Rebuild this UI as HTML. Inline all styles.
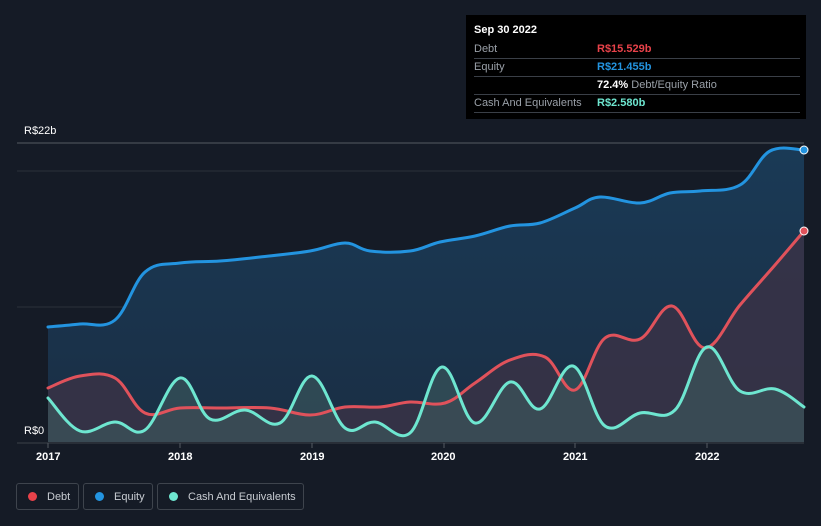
<!DOCTYPE html><html><head><style>
body{margin:0;width:821px;height:526px;background:#151b26;font-family:"Liberation Sans",sans-serif;overflow:hidden;position:relative}
.tt{position:absolute;left:466px;top:15px;width:340px;height:104px;background:#000;color:#fff;font-size:11px}
.r{position:absolute;left:8px;width:326px;height:18px;border-bottom:1px solid #3a3f47;line-height:18px}
.r span{position:absolute;left:123px}
.l{color:#9aa0a8}
.lg{position:absolute;top:483px;height:27px;border:1px solid #3e444d;border-radius:3px;color:#c8ccd2;font-size:11px;line-height:27px;box-sizing:border-box}
.dot{display:inline-block;width:9px;height:9px;border-radius:50%;margin:0 10px 0 11px;vertical-align:-1px}
.ax{position:absolute;top:451px;color:#fff;font-size:11px;font-weight:bold}
</style></head><body>
<svg id="s" width="821" height="526" style="position:absolute;left:0;top:0">
<defs><linearGradient id="eg" x1="0" y1="0" x2="0" y2="1"><stop offset="0" stop-color="#1a3a56"/><stop offset="1" stop-color="#1a2e44"/></linearGradient></defs>
<line x1="17" y1="143" x2="804" y2="143" stroke="#555b63"/>
<line x1="17" y1="171" x2="804" y2="171" stroke="#2a3039"/>
<line x1="17" y1="307" x2="804" y2="307" stroke="#2a3039"/>
<path id="ef" fill="url(#eg)"/>
<path id="df" fill="#3a3346" fill-opacity="0.85"/>
<path id="cf" fill="#3d5a5e" fill-opacity="0.6"/>
<g fill="none" stroke-width="3" stroke-linejoin="round" stroke-linecap="round">
<path id="el" stroke="#2394e0"/>
<path id="dl" stroke="#e0525b"/>
<path id="cl" stroke="#6ee6d0"/>
</g>
<line x1="17" y1="443" x2="804" y2="443" stroke="#3a4048"/>
<g stroke="#555b63"><line x1="48" y1="443" x2="48" y2="448"/><line x1="180" y1="443" x2="180" y2="448"/><line x1="312" y1="443" x2="312" y2="448"/><line x1="444" y1="443" x2="444" y2="448"/><line x1="575" y1="443" x2="575" y2="448"/><line x1="707" y1="443" x2="707" y2="448"/></g>
<circle cx="804" cy="150" r="4" fill="#2394e0" stroke="#fff" stroke-width="1"/>
<circle cx="804" cy="231" r="4" fill="#e0525b" stroke="#fff" stroke-width="1"/>
</svg>
<script>
function sm(p){var d="M"+p[0][0]+","+p[0][1];for(var i=0;i<p.length-1;i++){var a=p[i-1]||p[i],b=p[i],c=p[i+1],e=p[i+2]||c;var t=0.18;d+=" C"+(b[0]+(c[0]-a[0])*t)+","+(b[1]+(c[1]-a[1])*t)+" "+(c[0]-(e[0]-b[0])*t)+","+(c[1]-(e[1]-b[1])*t)+" "+c[0]+","+c[1];}return d;}
function P(s){return s.trim().split(/\s+/).map(function(x){return x.split(",").map(Number)});}
var E=P("48,327 80,324 115,320 145,272 180,263 220,261 260,257 310,251 345,243 370,251 410,251 440,242 475,236 510,226 540,223 575,208 600,197 640,203 670,193 700,191 740,185 770,151 804,150");
var D=P("48,388 80,376 115,378 145,413 180,408 220,408 270,408 310,415 345,407 380,407 410,402 445,403 475,383 510,360 545,357 575,390 605,338 640,339 672,306 705,348 740,305 775,265 804,231");
var C=P("48,398 80,431 115,422 145,430 180,378 210,419 245,410 280,423 312,376 345,428 375,422 410,433 442,367 475,423 510,382 540,409 573,366 605,426 640,413 675,410 707,347 740,391 775,389 804,407");
[["e",E],["d",D],["c",C]].forEach(function(k){var d=sm(k[1]);document.getElementById(k[0]+"l").setAttribute("d",d);document.getElementById(k[0]+"f").setAttribute("d",d+" L804,442 L48,442 Z");});
</script>
<div style="position:absolute;left:24px;top:125px;color:#fff;font-size:11px">R$22b</div>
<div style="position:absolute;left:24px;top:425px;color:#fff;font-size:11px">R$0</div>
<div class="ax" style="left:36px">2017</div><div class="ax" style="left:168px">2018</div><div class="ax" style="left:300px">2019</div><div class="ax" style="left:431px">2020</div><div class="ax" style="left:563px">2021</div><div class="ax" style="left:695px">2022</div>
<div class="tt">
<div style="position:absolute;left:8px;top:9px;font-weight:bold">Sep 30 2022</div>
<div class="r" style="top:25px"><b class="l" style="font-weight:normal">Debt</b><span style="color:#e8424a;font-weight:bold">R$15.529b</span></div>
<div class="r" style="top:43px"><b class="l" style="font-weight:normal">Equity</b><span style="color:#2394e0;font-weight:bold">R$21.455b</span></div>
<div class="r" style="top:61px"><span><b>72.4%</b> <i class="l" style="font-style:normal">Debt/Equity Ratio</i></span></div>
<div class="r" style="top:79px"><b class="l" style="font-weight:normal">Cash And Equivalents</b><span style="color:#6ee6d0;font-weight:bold">R$2.580b</span></div>
</div>
<div class="lg" style="left:16px;width:63px"><span class="dot" style="background:#e8424a"></span>Debt</div>
<div class="lg" style="left:83px;width:70px"><span class="dot" style="background:#2394e0"></span>Equity</div>
<div class="lg" style="left:157px;width:147px"><span class="dot" style="background:#6ee6d0"></span>Cash And Equivalents</div>
</body></html>
